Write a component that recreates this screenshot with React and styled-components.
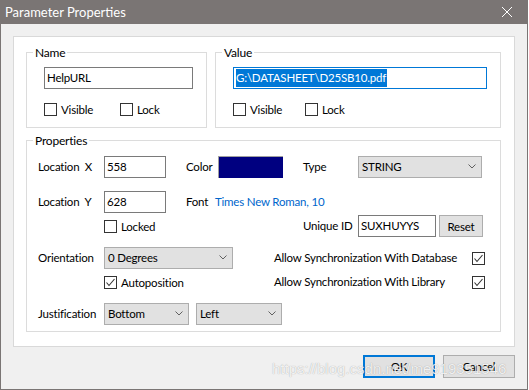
import React from "react";
import styled, { createGlobalStyle } from "styled-components";

const GlobalStyle = createGlobalStyle`
  html, body {
    margin: 0;
    padding: 0;
    background: #ffffff;
  }
  * {
    box-sizing: border-box;
  }
`;

const Window = styled.div`
  position: relative;
  width: 528px;
  height: 390px;
  background: #f0f0f0;
  border: 1px solid #7a7574;
  border-top: none;
  font-family: Lato, "Noto Sans", sans-serif;
  font-size: 11.5px;
  letter-spacing: -0.2px;
  color: #000;
  display: flex;
  flex-direction: column;
`;

const TitleBar = styled.div`
  height: 24px;
  margin: 0 -1px;
  background: #7a7574;
  color: #fff;
  display: flex;
  align-items: center;
  justify-content: space-between;
  padding: 0 16px 1px 5px;
  font-size: 13px;
  letter-spacing: 0;
`;

const Body = styled.div`
  padding: 12px 12px 0 12px;
  display: flex;
  flex-direction: column;
`;

const Panel = styled.div`
  height: 311px;
  background: #fff;
  border: 1px solid #d9d9d9;
  padding: 8px 12px 0 12px;
  display: flex;
  flex-direction: column;
  gap: 5px;
`;

const TopGroups = styled.div`
  display: flex;
  gap: 8px;
`;

const Group = styled.fieldset`
  margin: 0;
  width: ${(p) => p.$w}px;
  height: ${(p) => p.$h}px;
  border: 1px solid #dcdcdc;
  padding: 0 6px;
  display: flex;
  flex-direction: column;
  min-width: 0;
`;

const Legend = styled.legend`
  padding: 0 2px;
  line-height: 15px;
  font-size: 12px;
`;

const TextBox = styled.div`
  width: ${(p) => p.$w}px;
  height: 22px;
  border: 1px solid ${(p) => (p.$focus ? "#0078d7" : "#7a7a7a")};
  background: #fff;
  display: flex;
  align-items: center;
  padding: 0 2px 1px;
  margin-left: ${(p) => p.$ml || 0}px;
  margin-top: ${(p) => p.$mt || 0}px;
  white-space: nowrap;
  overflow: hidden;
  flex-shrink: 0;
`;

const Selected = styled.span`
  background: #0078d7;
  color: #fff;
  line-height: 18px;
  padding-right: 1px;
`;

const CheckRow = styled.div`
  display: flex;
  align-items: center;
  height: 16px;
  margin-left: ${(p) => p.$ml || 0}px;
  margin-top: ${(p) => p.$mt || 0}px;
`;

const CheckItem = styled.label`
  display: flex;
  align-items: center;
  gap: 4px;
  width: ${(p) => (p.$w ? `${p.$w}px` : "auto")};
  flex-shrink: 0;
`;

const Box = styled.span`
  width: 13px;
  height: 13px;
  border: 1px solid #333;
  background: #fff;
  display: flex;
  align-items: center;
  justify-content: center;
  flex-shrink: 0;
`;

const PropRows = styled.div`
  display: flex;
  flex-direction: column;
  margin-left: 5px;
`;

const Row = styled.div`
  display: flex;
  align-items: center;
  height: ${(p) => p.$h || 22}px;
  margin-top: ${(p) => p.$mt || 0}px;
`;

const Label = styled.span`
  width: ${(p) => p.$w}px;
  margin-left: ${(p) => p.$ml || 0}px;
  margin-bottom: 1px;
  flex-shrink: 0;
  white-space: nowrap;
`;

const Swatch = styled.div`
  width: 65px;
  height: 22px;
  background: #000080;
  border-top: 1px solid #a0a0a0;
  border-left: 1px solid #a0a0a0;
`;

const Select = styled.div`
  width: ${(p) => p.$w}px;
  height: 22px;
  margin-left: ${(p) => p.$ml || 0}px;
  background: #e1e1e1;
  border: 1px solid #adadad;
  display: flex;
  align-items: center;
  justify-content: space-between;
  padding: 0 5px 1px 3px;
  flex-shrink: 0;
`;

const Link = styled.span`
  color: #0066cc;
  white-space: nowrap;
  margin-bottom: 1px;
`;

const Button = styled.button`
  width: ${(p) => p.$w}px;
  height: ${(p) => p.$h || 23}px;
  margin-left: ${(p) => p.$ml || 0}px;
  background: #e1e1e1;
  border: ${(p) => (p.$primary ? "2px solid #0078d7" : "1px solid #adadad")};
  font-family: inherit;
  font-size: 11.5px;
  letter-spacing: -0.2px;
  color: #000;
  padding: 0;
  flex-shrink: 0;
`;

const Footer = styled.div`
  display: flex;
  justify-content: flex-end;
  gap: 8px;
  margin-top: 8px;
`;

const Watermark = styled.div`
  position: absolute;
  left: 271px;
  top: 360px;
  font-family: "Liberation Sans", Arial, sans-serif;
  font-size: 15px;
  letter-spacing: 0;
  color: rgba(255, 255, 255, 0.85);
  text-shadow: 0 0 1px rgba(0, 0, 0, 0.35);
  pointer-events: none;
  white-space: nowrap;
`;

const Chevron = () => (
  <svg width="8" height="5" viewBox="0 0 8 5">
    <polyline points="0.5,0.5 4,4 7.5,0.5" fill="none" stroke="#606060" strokeWidth="1" />
  </svg>
);

const Tick = () => (
  <svg width="11" height="11" viewBox="0 0 11 11">
    <polyline points="1.5,5.5 4,8.5 9.5,2" fill="none" stroke="#333" strokeWidth="1.1" />
  </svg>
);

const Check = ({ label, checked, w }) => (
  <CheckItem $w={w}>
    <Box>{checked && <Tick />}</Box>
    {label && <span>{label}</span>}
  </CheckItem>
);

const Dropdown = ({ w, ml, children }) => (
  <Select $w={w} $ml={ml}>
    <span>{children}</span>
    <Chevron />
  </Select>
);

export default function App() {
  return (
    <>
      <GlobalStyle />
      <Window>
        <TitleBar>
          <span>Parameter Properties</span>
          <svg width="10" height="10" viewBox="0 0 10 10">
            <path d="M0 0 L10 10 M10 0 L0 10" stroke="#fff" strokeWidth="1" />
          </svg>
        </TitleBar>
        <Body>
          <Panel>
            <TopGroups>
              <Group $w={181} $h={83}>
                <Legend>Name</Legend>
                <TextBox $w={149} $ml={11} $mt={7}>HelpURL</TextBox>
                <CheckRow $ml={11} $mt={12}>
                  <Check label="Visible" w={76} />
                  <Check label="Lock" />
                </CheckRow>
              </Group>
              <Group $w={286} $h={83}>
                <Legend>Value</Legend>
                <TextBox $w={254} $ml={11} $mt={7} $focus>
                  <Selected>G:\DATASHEET\D25SB10.pdf</Selected>
                </TextBox>
                <CheckRow $ml={11} $mt={12}>
                  <Check label="Visible" w={72} />
                  <Check label="Lock" />
                </CheckRow>
              </Group>
            </TopGroups>
            <Group $w={475} $h={199}>
              <Legend>Properties</Legend>
              <PropRows>
                <Row $mt={8}>
                  <Label $w={66}>Location&nbsp; X</Label>
                  <TextBox $w={62}>558</TextBox>
                  <Label $w={32} $ml={20}>Color</Label>
                  <Swatch />
                  <Label $w={55} $ml={20}>Type</Label>
                  <Dropdown w={124}>STRING</Dropdown>
                </Row>
                <Row $mt={13}>
                  <Label $w={66}>Location&nbsp; Y</Label>
                  <TextBox $w={62}>628</TextBox>
                  <Label $w={29} $ml={20}>Font</Label>
                  <Link>Times New Roman, 10</Link>
                </Row>
                <Row $mt={2}>
                  <Label $w={66} />
                  <Check label="Locked" w={199} />
                  <Label $w={55}>Unique ID</Label>
                  <TextBox $w={78}>SUXHUYYS</TextBox>
                  <Button $w={44} $h={22} $ml={3}>Reset</Button>
                </Row>
                <Row $mt={10}>
                  <Label $w={66}>Orientation</Label>
                  <Dropdown w={129}>0 Degrees</Dropdown>
                  <Label $w={198} $ml={41}>Allow Synchronization With Database</Label>
                  <Box><Tick /></Box>
                </Row>
                <Row $mt={5} $h={16}>
                  <Label $w={66} />
                  <Check label="Autoposition" checked w={170} />
                  <Label $w={198}>Allow Synchronization With Library</Label>
                  <Box><Tick /></Box>
                </Row>
                <Row $mt={13}>
                  <Label $w={66}>Justification</Label>
                  <Dropdown w={85}>Bottom</Dropdown>
                  <Dropdown w={86} ml={7}>Left</Dropdown>
                </Row>
              </PropRows>
            </Group>
          </Panel>
          <Footer>
            <Button $w={72} $primary>OK</Button>
            <Button $w={72}>Cancel</Button>
          </Footer>
        </Body>
        <Watermark>https://blog.csdn.net/me919351546</Watermark>
      </Window>
    </>
  );
}
